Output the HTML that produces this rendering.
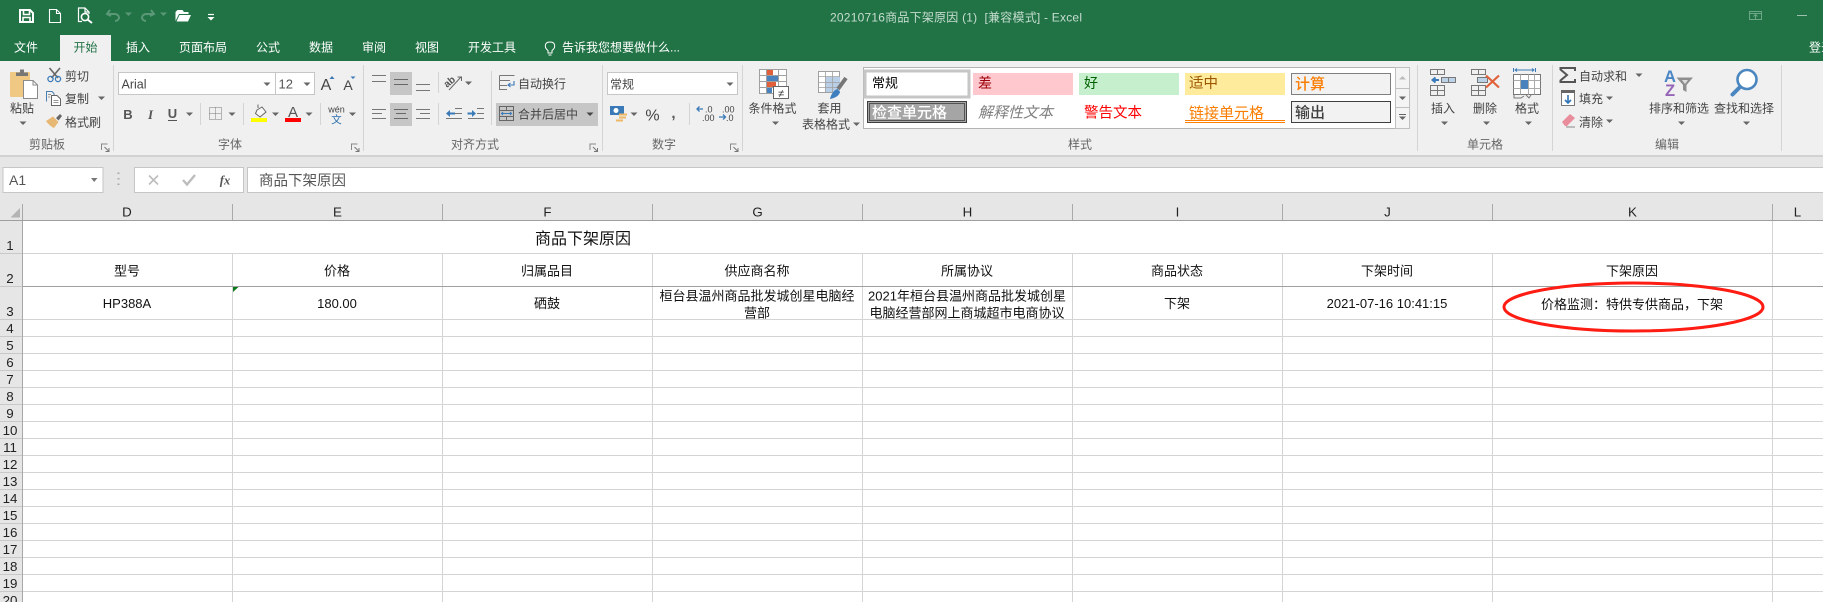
<!DOCTYPE html>
<html><head><meta charset="utf-8"><title>Excel</title>
<style>
html,body{margin:0;padding:0;background:#fff;width:1823px;height:602px;overflow:hidden}
svg{display:block}
text{font-family:"Liberation Sans","Noto Sans CJK SC",sans-serif;font-size:12px;fill:#444}
.m{text-anchor:middle}
.w{fill:#fff}
.l{fill:#666;text-anchor:middle}
.c{font-size:13px;fill:#111;text-anchor:middle}
.h{font-size:13.33px;fill:#222;text-anchor:middle}
.r{font-size:13.33px;fill:#222;text-anchor:middle}
.c1{shape-rendering:crispEdges}
.ar{fill:#666}
</style></head><body>
<svg width="1823" height="602" viewBox="0 0 1823 602" xmlns="http://www.w3.org/2000/svg">
<defs>
<path id="ar" d="M-3.5 -1.5H3.5L0 2Z" fill="#666"/>
<g id="lau"><path d="M-4.5 -4.5H2V-3.5H-3.5V2H-4.5Z" fill="#888"/><path d="M-1 -1L3.5 3.5M3.5 0V3.5H0" stroke="#777" fill="none"/></g>
</defs>
<!-- backgrounds -->
<rect width="1823" height="61" fill="#217346"/>
<rect y="61" width="1823" height="94" fill="#f0f0f0"/>
<rect y="155" width="1823" height="2" fill="#d2d2d2"/>
<rect y="157" width="1823" height="63" fill="#e6e6e6"/>

<!-- QAT -->
<g fill="none" stroke="#fff" stroke-width="2">
<path d="M20 10H30L33 13V22H20Z"/><path d="M23.5 10V14.5H29.5V10M23 22V17.5H30V22" stroke-width="1.6"/>
</g>
<path d="M49.5 9.5H56.5L60.5 13.5V22.5H49.5ZM56.5 9.5V13.5H60.5" fill="none" stroke="#fff" stroke-width="1.1"/>
<path d="M82 21.5H78.5V8H85L89 12V14M85 8V12H89" fill="none" stroke="#fff" stroke-width="1.2"/>
<circle cx="85" cy="17" r="3.6" fill="none" stroke="#fff" stroke-width="1.6"/><path d="M87.5 19.5L92 23" stroke="#fff" stroke-width="2"/>
<path d="M110 10L107 14L111 16M107.5 14H114.5C118 14 119 16.5 119 17.5C119 19.5 117 21 115 21" fill="none" stroke="#5b9877" stroke-width="2"/>
<path d="M151 10L154 14L150 16M153.5 14H146.5C143 14 142 16.5 142 17.5C142 19.5 144 21 146 21" fill="none" stroke="#5b9877" stroke-width="2"/>
<path d="M160 12.5H167L163.500 16Z" fill="#5b9877"/><path d="M125 12.500H132L128.500 16Z" fill="#5b9877"/>
<path d="M175.500 21V12L177.500 10H182.500L184 12H188.500V14H179L175.500 21ZM176.500 21.500L179.500 15H191L188 21.500Z" fill="#fff"/>
<path d="M208 14.500H214" stroke="#fff" stroke-width="1.200"/><path d="M207.500 17H214.500L211 20.500Z" fill="#fff"/>

<!-- Title -->
<text x="830" y="21.500" textLength="252" style="fill:#c7ddd0;white-space:pre">20210716商品下架原因 (1)  [兼容模式] - Excel</text>
<path d="M1749.500 11.500H1761.500V19.500H1749.500ZM1749.500 13.500H1761.500M1755.500 19V15M1753.500 16.500L1755.500 14.500L1757.500 16.500" fill="none" stroke="#6ea688" stroke-width="1"/>
<rect x="1797" y="15" width="10" height="1" fill="#9cc1ac"/>

<!-- Tabs -->
<rect x="60" y="35" width="51" height="26" fill="#f0f0f0"/>
<g class="w">
<text class="m w" x="26" y="51.500">文件</text>
<text class="m" x="85.500" y="51.500" style="fill:#217346">开始</text>
<text class="m w" x="138" y="51.500">插入</text>
<text class="m w" x="203" y="51.500">页面布局</text>
<text class="m w" x="268" y="51.500">公式</text>
<text class="m w" x="321" y="51.500">数据</text>
<text class="m w" x="374" y="51.500">审阅</text>
<text class="m w" x="427" y="51.500">视图</text>
<text class="m w" x="492" y="51.500">开发工具</text>
<text class="w" x="562" y="51.500">告诉我您想要做什么...</text>
<text class="w" x="1809" y="51.500">登录</text>
</g>
<path d="M548 53V50.500C546 49 545.300 47.500 545.300 46C545.300 43.500 547 42 550 42C553 42 554.700 43.500 554.700 46C554.700 47.500 554 49 552 50.500V53ZM548.500 55H551.500" fill="none" stroke="#fff" stroke-width="1"/>

<!-- group separators -->
<g fill="#d4d4d4" class="c1">
<rect x="113" y="65" width="1" height="86"/><rect x="363" y="65" width="1" height="86"/><rect x="602" y="65" width="1" height="86"/><rect x="742" y="65" width="1" height="86"/><rect x="1417" y="65" width="1" height="86"/><rect x="1552" y="65" width="1" height="86"/><rect x="1781" y="65" width="1" height="86"/>
<rect x="200" y="103" width="1" height="22"/><rect x="243" y="103" width="1" height="22"/><rect x="320" y="103" width="1" height="22"/>
<rect x="438" y="72" width="1" height="21"/><rect x="438" y="103" width="1" height="22"/><rect x="491" y="71" width="1" height="54"/><rect x="689" y="103" width="1" height="22"/>
</g>

<!-- Clipboard -->
<rect x="10" y="72" width="20" height="25" rx="1" fill="#efc984"/>
<path d="M16 76V72.500H20V69.500H24V72.500H28V76Z" fill="#777"/>
<path d="M23.500 80.500H33L37.500 85V98.500H23.500Z" fill="#fff" stroke="#8a8a8a"/>
<path d="M33 80.500V85H37.500" fill="none" stroke="#8a8a8a"/>
<text class="m" x="22" y="112.500">粘贴</text><use href="#ar" x="23" y="123"/>
<path d="M49.500 68L58 78M60 68L51.500 78" stroke="#666" stroke-width="1.600"/>
<circle cx="50.500" cy="79" r="2.600" fill="none" stroke="#3a7ab8" stroke-width="1.300"/><circle cx="58" cy="79" r="2.600" fill="none" stroke="#3a7ab8" stroke-width="1.300"/>
<text x="65" y="80.500">剪切</text>
<path d="M46.500 101.500V91.500H52L54 93.500V95" fill="none" stroke="#4a80b0"/>
<path d="M51.500 95.500H57L60.500 99V105.500H51.500Z" fill="#fff" stroke="#666"/>
<path d="M53.500 100.500H58.500M53.500 102.500H58.500M48 94.500H51M48 97H50" stroke="#777" stroke-width=".8"/>
<text x="65" y="103">复制</text><use href="#ar" x="101.500" y="98"/>
<path d="M56 118L60 114L62 116L58.500 120.500Z" fill="#666"/>
<path d="M46 121L53 116.500L58.500 122L54 128C51.500 127 48 124 46 121Z" fill="#e7b873"/>
<text x="65" y="126.500">格式刷</text>
<text class="l" x="47" y="148.500">剪贴板</text><use href="#lau" x="105.500" y="148"/>

<!-- Font -->
<rect x="118.500" y="72.500" width="196" height="22" fill="#fff" stroke="#c6c6c6"/>
<text x="121.500" y="88.500" style="font-size:12.500px">Arial</text><use href="#ar" x="267" y="84"/>
<text x="278.500" y="88.500" style="font-size:13px;fill:#555">12</text>
<rect x="275" y="73" width="1" height="21" fill="#c6c6c6"/>
<use href="#ar" x="307" y="84"/>
<text class="m" x="326" y="90" style="font-size:16px">A</text><path d="M329.500 79L332 76L334.500 79Z" fill="#3a78b5"/>
<text class="m" x="348" y="90" style="font-size:14px">A</text><path d="M350.500 76.500H355.500L353 79Z" fill="#3a78b5"/>
<text class="m" x="128" y="119" style="font-size:13px;font-weight:bold;fill:#555">B</text>
<text class="m" x="150.500" y="119" style="font-size:13px;font-weight:bold;font-style:italic;font-family:'Liberation Serif',serif;fill:#555">I</text>
<text class="m" x="172.500" y="118" style="font-size:13px;font-weight:bold;fill:#555">U</text><rect x="168" y="120" width="9" height="1" fill="#555"/>
<use href="#ar" x="189.500" y="114"/>
<path d="M209.500 107.500H221.500V119.500H209.500ZM215.500 107.500V119.500M209.500 113.500H221.500" fill="none" stroke="#777" stroke-dasharray="1 1"/>
<use href="#ar" x="232" y="114"/>
<path d="M257 110L262 107L266 112L260 117L255.500 113.500Z" fill="#f7f7f7" stroke="#666"/><path d="M258 108V104.500" stroke="#666"/>
<rect x="251" y="118" width="16" height="4" fill="#ffff00"/><use href="#ar" x="275.500" y="114"/>
<text class="m" x="293" y="117" style="font-size:15px;fill:#555">A</text>
<rect x="285" y="118" width="16" height="4" fill="#ff0000"/><use href="#ar" x="309" y="114"/>
<text class="m" x="336.500" y="112.500" style="font-size:9px">wén</text>
<text class="m" x="336.500" y="123" style="font-size:10.500px;fill:#2c70ac">文</text><use href="#ar" x="352.500" y="114"/>
<text class="l" x="230" y="148.500">字体</text><use href="#lau" x="355.500" y="148"/>

<!-- Align -->
<rect x="390" y="72" width="22" height="23" fill="#c6c6c6"/><rect x="390" y="103" width="22" height="23" fill="#c6c6c6"/>
<g stroke="#777" class="c1" fill="none">
<path d="M372 75.500H386M372 81.500H386"/><path d="M394 79.500H408M394 84.500H408" stroke="#666"/><path d="M416 84.500H430M416 90.500H430"/>
<path d="M372 109.500H386M372 113.500H382M372 118.500H386"/><path d="M394 109.500H408M396 113.500H406M394 118.500H408" stroke="#666"/><path d="M416 109.500H430M420 113.500H430M416 118.500H430"/>
<path d="M455 108.500H462M455 113.500H462M446 118.500H462"/><path d="M477 108.500H484M477 113.500H484M468 118.500H484"/>
</g>
<path d="M446 113.500L450 110V112.500H455V114.500H450V117Z" fill="#3a7ab8"/><path d="M476 113.500L472 110V112.500H467.500V114.500H472V117Z" fill="#3a7ab8"/>
<g transform="rotate(-40 453 83)"><text class="m" x="451" y="83" style="font-size:10px;font-weight:bold;fill:#555">ab</text></g>
<path d="M449 90L461 77M457.500 77H461.500V81" fill="none" stroke="#666" stroke-width="1"/><use href="#ar" x="468.500" y="83"/>
<g fill="none" stroke="#666">
<path d="M499.500 75.500H514.500M499.500 75.500V89.500H507M499.500 80.500H510M499.500 85.500H507" stroke="#777"/>
</g>
<path d="M514 81V85H508.500M510.500 83L508 85L510.500 87" fill="none" stroke="#3a7ab8" stroke-width="1.100"/>
<text x="518" y="88">自动换行</text>
<rect x="496" y="103" width="102" height="23" fill="#c6c6c6"/>
<path d="M499.500 106.500H513.500V120.500H499.500ZM499.500 110.500H513.500M499.500 116.500H513.500M506.500 106.500V110.500M506.500 116.500V120.500" fill="none" stroke="#666"/>
<path d="M501.500 113.500H511.500M503 112L501.500 113.500L503 115M510 112L511.500 113.500L510 115" fill="none" stroke="#3a7ab8"/>
<text x="518" y="118.500">合并后居中</text>
<path d="M586.500 112.500H593.500L590 116Z" fill="#444"/>
<text class="l" x="475" y="148.500">对齐方式</text><use href="#lau" x="594" y="148"/>

<!-- Number -->
<rect x="607.500" y="72.500" width="130" height="22" fill="#fff" stroke="#c6c6c6"/>
<text x="610" y="88.500">常规</text><use href="#ar" x="730" y="84"/>
<rect x="610" y="106" width="14" height="9" fill="#3a7ab8"/><circle cx="616" cy="110.500" r="2.500" fill="#fff"/>
<path d="M619 114.500H627M619 117.500H626M616 120.500H623" stroke="#eeb866" stroke-width="2"/>
<use href="#ar" x="634" y="114"/>
<text class="m" x="652.500" y="120.500" style="font-size:16px">%</text>
<text class="m" x="673.500" y="118" style="font-size:15px;font-weight:bold;fill:#555">,</text>
<path d="M697 109H703M699.500 106.500L697 109L699.500 111.500" fill="none" stroke="#3a7ab8" stroke-width="1.300"/>
<text x="705" y="112.500" style="font-size:9px;fill:#444">.0</text><text x="702" y="121" style="font-size:9px;fill:#444">.00</text>
<text x="722" y="112.500" style="font-size:9px;fill:#444">.00</text>
<path d="M719 117H725.500M723 114.500L725.500 117L723 119.500" fill="none" stroke="#3a7ab8" stroke-width="1.300"/>
<text x="726" y="121" style="font-size:9px;fill:#444">.0</text>
<text class="l" x="664" y="148.500">数字</text><use href="#lau" x="734.500" y="148"/>

<!-- Cond format -->
<path d="M759.500 69.500H786.500V93.500H759.500ZM766.500 69.500V93.500M778.500 69.500V93.500M759.500 75.500H786.500M759.500 81.500H786.500M759.500 87.500H786.500" fill="#fff" stroke="#a0a0a0"/>
<rect x="767" y="70" width="6" height="5" fill="#e0603c"/><rect x="767" y="76" width="11" height="5" fill="#4a82bd"/><rect x="767" y="82" width="9" height="5" fill="#e0603c"/><rect x="767" y="88" width="5" height="5" fill="#4a82bd"/>
<rect x="773.500" y="86.500" width="15" height="12" fill="#fff" stroke="#666"/>
<text class="m" x="781" y="97" style="font-size:11px;fill:#333">≠</text>
<text class="m" x="772.500" y="112.500">条件格式</text><use href="#ar" x="775.500" y="123"/>
<rect x="818.500" y="71.500" width="21" height="21" fill="#fff" stroke="#a0a0a0"/>
<rect x="825" y="77" width="15" height="15" fill="#b9cfe8"/>
<path d="M825.500 71.500V92.500M832.500 71.500V92.500M818.500 76.500H839.500M818.500 82.500H839.500M818.500 87.500H839.500" fill="none" stroke="#a0a0a0" stroke-width=".8"/>
<path d="M846 78L838 89" stroke="#777" stroke-width="4"/>
<path d="M830 99C831 94 834 90 837.500 89L840 92C839 96 835 98 830 99Z" fill="#3f7fc0"/>
<text class="m" x="829.500" y="112.500">套用</text>
<text class="m" x="826" y="128.500">表格格式</text><use href="#ar" x="856.500" y="124"/>

<!-- Styles gallery -->
<rect x="863.500" y="67.500" width="532" height="61" fill="#fff" stroke="#b4b4b4"/>
<rect x="865" y="71" width="104" height="26" fill="#fff" stroke="#c6c6c6" stroke-width="3"/>
<text x="872" y="87.500" style="font-size:13px;fill:#000">常规</text>
<rect x="973" y="73" width="100" height="22" fill="#ffc7ce"/><text x="978" y="88" style="font-size:14px;fill:#9c0006">差</text>
<rect x="1079" y="73" width="100" height="22" fill="#c6efce"/><text x="1084" y="88" style="font-size:14px;fill:#006100">好</text>
<rect x="1185" y="73" width="100" height="22" fill="#ffeb9c"/><text x="1189" y="88" style="font-size:14.500px;fill:#9c5700">适中</text>
<rect x="1291.500" y="73.500" width="99" height="21" fill="#f2f2f2" stroke="#7f7f7f"/><text x="1295" y="89" style="font-size:15px;font-weight:500;fill:#fa7d00">计算</text>
<rect x="867.500" y="101.500" width="99" height="21" fill="#a5a5a5" stroke="#3f3f3f"/><rect x="869.500" y="103.500" width="95" height="17" fill="none" stroke="#3f3f3f" stroke-width=".8"/>
<text x="872" y="117.500" style="font-size:15px;font-weight:500;fill:#fff">检查单元格</text>
<text x="978" y="117.500" style="font-size:15px;font-style:italic;fill:#7f7f7f">解释性文本</text>
<text x="1084" y="117.500" style="font-size:14.500px;fill:#ff0000">警告文本</text>
<text x="1189" y="118" style="font-size:15px;fill:#fa7d00">链接单元格</text>
<rect x="1185" y="120" width="100" height="1" fill="#ff8001"/><rect x="1185" y="122" width="100" height="1" fill="#ff8001"/>
<rect x="1291.500" y="101.500" width="99" height="21" fill="#f2f2f2" stroke="#3f3f3f"/><text x="1295" y="117.500" style="font-size:15px;font-weight:500;fill:#3f3f3f">输出</text>
<rect x="1395.500" y="67.500" width="14" height="61" fill="#f4f4f4" stroke="#c0c0c0"/>
<path d="M1396 88.500H1409M1396 107.500H1409" stroke="#c0c0c0"/>
<path d="M1399 79.500H1406L1402.500 76Z" fill="#bbb"/><use href="#ar" x="1402.500" y="98"/>
<path d="M1399 114.500H1406" stroke="#666"/><use href="#ar" x="1402.500" y="118"/>
<text class="l" x="1080" y="148.500">样式</text>

<!-- Cells -->
<g fill="none" stroke="#777">
<path d="M1430.500 69.500H1444.500V74.500H1430.500ZM1437.500 69.500V74.500"/>
<path d="M1430.500 85.500H1444.500V95.500H1430.500ZM1437.500 85.500V95.500M1430.500 90.500H1444.500"/>
<path d="M1471.500 69.500H1485.500V74.500H1471.500ZM1478.500 69.500V74.500"/>
<path d="M1471.500 85.500H1485.500V95.500H1471.500ZM1478.500 85.500V95.500M1471.500 90.500H1485.500"/>
</g>
<rect x="1441.500" y="77.500" width="14" height="5" fill="#bcd2e8" stroke="#777"/><path d="M1448.500 77.500V82.500" stroke="#777"/>
<path d="M1439 80H1433M1435.500 77.500L1432.500 80L1435.500 82.500" fill="none" stroke="#3a7ab8" stroke-width="2"/>
<rect x="1477.500" y="77.500" width="10" height="5" fill="#bcd2e8" stroke="#777"/>
<path d="M1486 75.500L1499 87.500M1499 75.500L1486 87.500" stroke="#e0623a" stroke-width="2.200"/>
<text class="m" x="1443" y="112.500">插入</text><use href="#ar" x="1444.500" y="123"/>
<text class="m" x="1485" y="112.500">删除</text><use href="#ar" x="1486.500" y="123"/>
<path d="M1513.500 68V72M1535.500 68V72M1515 70H1534M1517 68.500L1515 70L1517 71.500M1532 68.500L1534 70L1532 71.500" fill="none" stroke="#3a7ab8"/>
<rect x="1513.500" y="74.500" width="27" height="20" fill="#fff" stroke="#777"/>
<path d="M1520.500 74.500V94.500M1528.500 74.500V94.500M1534.500 74.500V94.500M1513.500 80.500H1540.500M1513.500 88.500H1540.500" fill="none" stroke="#aaa"/>
<rect x="1521" y="80" width="7" height="9" fill="#4a82bd"/>
<path d="M1514 95V98H1521L1524 96M1526 95L1529 98L1531 95" fill="none" stroke="#777"/>
<text class="m" x="1527" y="112.500">格式</text><use href="#ar" x="1528.500" y="123"/>
<text class="l" x="1485" y="148.500">单元格</text>

<!-- Editing -->
<path d="M1575 71V68H1560.500V69.500L1567 75L1560.500 80.500V82H1575V79" fill="none" stroke="#555" stroke-width="2"/>
<text x="1579" y="80.500">自动求和</text><use href="#ar" x="1639" y="75"/>
<rect x="1561.500" y="90.500" width="13" height="15" fill="#fff" stroke="#777"/><rect x="1561" y="90" width="14" height="3" fill="#666"/>
<path d="M1568 95V103M1565 100L1568 103L1571 100" fill="none" stroke="#2f72b5" stroke-width="1.600"/>
<text x="1579" y="103">填充</text><use href="#ar" x="1609.500" y="98"/>
<path d="M1562 122L1570 114L1575 118L1567 126H1565Z" fill="#e98c9c"/><path d="M1566 127H1575" stroke="#888"/>
<text x="1579" y="126.500">清除</text><use href="#ar" x="1609.500" y="121"/>
<text class="m" x="1670" y="82" style="font-size:16.500px;font-weight:bold;fill:#4a86c5">A</text>
<text class="m" x="1670" y="96" style="font-size:16.500px;font-weight:bold;fill:#9565b8">Z</text>
<path d="M1676.500 77.500H1693L1686.500 85V92L1683 90V85Z" fill="#8e8e8e"/><path d="M1682 80H1688L1685 84Z" fill="#ddd"/>
<text class="m" x="1679" y="112.500">排序和筛选</text><use href="#ar" x="1681.500" y="123"/>
<circle cx="1747" cy="79.500" r="9.500" fill="#fff" stroke="#4a86c0" stroke-width="2.600"/>
<path d="M1740 87L1732.500 94.500" stroke="#4a86c0" stroke-width="4" stroke-linecap="round"/>
<text class="m" x="1744" y="112.500">查找和选择</text><use href="#ar" x="1746.500" y="123"/>
<text class="l" x="1667" y="148.500">编辑</text>

<!-- Formula bar -->
<rect x="3" y="167.500" width="100" height="25" fill="#fff" stroke="#c6c6c6"/>
<text x="9" y="185" style="font-size:14px;fill:#555">A1</text>
<path d="M91 178H97.500L94.200 182Z" fill="#777"/>
<path d="M118.500 172.500V174M118.500 178V179.500M118.500 183.500V185" stroke="#aaa" stroke-width="2"/>
<rect x="134.500" y="167.500" width="109" height="25" fill="#fff" stroke="#c6c6c6"/>
<path d="M149 175.500L158 184.500M158 175.500L149 184.500" stroke="#bdbdbd" stroke-width="1.600"/>
<path d="M183 180L187 184.500L195 175" fill="none" stroke="#bdbdbd" stroke-width="2.400"/>
<text class="m" x="225" y="184.500" style="font-size:12.500px;font-style:italic;font-weight:bold;font-family:'Liberation Serif',serif;fill:#555">fx</text>
<rect x="247.500" y="167.500" width="1580" height="25" fill="#fff" stroke="#c6c6c6"/>
<text x="259" y="185.500" style="font-size:14.500px;fill:#555">商品下架原因</text>

<!-- Sheet -->
<rect x="0" y="221" width="1823" height="381" fill="#fff"/>
<rect x="0" y="221" width="22" height="381" fill="#e6e6e6"/>
<path d="M20 208V217.500H10.500Z" fill="#b4b4b4"/>
<path class="c1" d="M22.500 204V602" stroke="#a8a8a8" fill="none"/>
<path class="c1" d="M0 220.500H1823" stroke="#9e9e9e" fill="none"/>
<path class="c1" d="M232.500 204V220M442.500 204V220M652.500 204V220M862.500 204V220M1072.500 204V220M1282.500 204V220M1492.500 204V220M1772.500 204V220" stroke="#aaa" fill="none"/>
<path class="c1" fill="none" stroke="#d4d4d4" d="M23 253.500H1823M23 319.500H1823M23 336.500H1823M23 353.500H1823M23 370.500H1823M23 387.500H1823M23 404.500H1823M23 421.500H1823M23 438.500H1823M23 455.500H1823M23 472.500H1823M23 489.500H1823M23 506.500H1823M23 523.500H1823M23 540.500H1823M23 557.500H1823M23 574.500H1823M23 591.500H1823 M232.500 254V602M442.500 254V602M652.500 254V602M862.500 254V602M1072.500 254V602M1282.500 254V602M1492.500 254V602M1772.500 221V602"/>
<path class="c1" d="M23 286.500H1823" stroke="#a0a0a0" fill="none"/>
<path class="c1" fill="none" stroke="#c8c8c8" d="M0 253.500H22M0 286.500H22M0 319.500H22M0 336.500H22M0 353.500H22M0 370.500H22M0 387.500H22M0 404.500H22M0 421.500H22M0 438.500H22M0 455.500H22M0 472.500H22M0 489.500H22M0 506.500H22M0 523.500H22M0 540.500H22M0 557.500H22M0 574.500H22M0 591.500H22"/>
<path d="M233 287H238.500L233 292Z" fill="#0b7a1a"/>

<g>
<text class="h" x="127" y="216.500">D</text><text class="h" x="337.500" y="216.500">E</text><text class="h" x="547.500" y="216.500">F</text><text class="h" x="757.500" y="216.500">G</text><text class="h" x="967.500" y="216.500">H</text><text class="h" x="1177.500" y="216.500">I</text><text class="h" x="1387.500" y="216.500">J</text><text class="h" x="1632.500" y="216.500">K</text><text class="h" x="1797.500" y="216.500">L</text>
</g>
<g>
<text class="r" x="10" y="250">1</text><text class="r" x="10" y="283">2</text><text class="r" x="10" y="316">3</text><text class="r" x="10" y="333">4</text><text class="r" x="10" y="350">5</text><text class="r" x="10" y="367">6</text><text class="r" x="10" y="384">7</text><text class="r" x="10" y="401">8</text><text class="r" x="10" y="418">9</text><text class="r" x="10" y="435">10</text><text class="r" x="10" y="452">11</text><text class="r" x="10" y="469">12</text><text class="r" x="10" y="486">13</text><text class="r" x="10" y="503">14</text><text class="r" x="10" y="520">15</text><text class="r" x="10" y="537">16</text><text class="r" x="10" y="554">17</text><text class="r" x="10" y="571">18</text><text class="r" x="10" y="588">19</text><text class="r" x="10" y="605">20</text>
</g>

<text x="535" y="244" style="font-size:16px;fill:#111">商品下架原因</text>
<text class="c" x="127" y="275.500">型号</text>
<text class="c" x="337" y="275.500">价格</text>
<text class="c" x="547" y="275.500">归属品目</text>
<text class="c" x="757" y="275.500">供应商名称</text>
<text class="c" x="967" y="275.500">所属协议</text>
<text class="c" x="1177" y="275.500">商品状态</text>
<text class="c" x="1387" y="275.500">下架时间</text>
<text class="c" x="1632" y="275.500">下架原因</text>
<text class="c" x="127" y="308">HP388A</text>
<text class="c" x="337" y="308">180.00</text>
<text class="c" x="547" y="308">硒鼓</text>
<text class="c" x="757" y="300.500">桓台县温州商品批发城创星电脑经</text>
<text class="c" x="757" y="317.500">营部</text>
<text class="c" x="967" y="300.500">2021年桓台县温州商品批发城创星</text>
<text class="c" x="967" y="317.500">电脑经营部网上商城超市电商协议</text>
<text class="c" x="1177" y="308">下架</text>
<text class="c" x="1387" y="308">2021-07-16 10:41:15</text>
<text class="c" x="1632" y="309">价格监测：特供专供商品，下架</text>

<ellipse cx="1633.500" cy="307" rx="129.500" ry="24" fill="none" stroke="#ff1c12" stroke-width="3"/>
</svg>
</body></html>
